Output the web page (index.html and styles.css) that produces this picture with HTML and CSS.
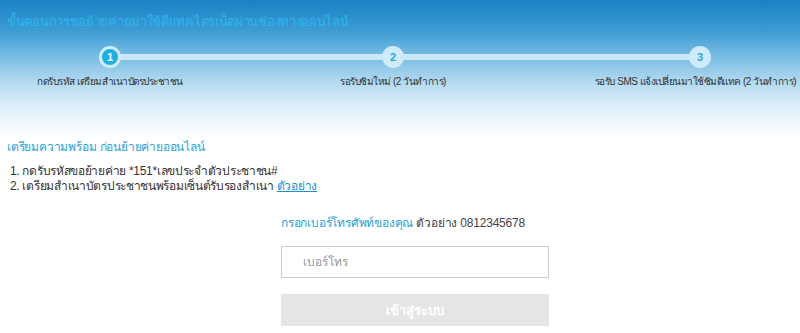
FILE: index.html
```html
<!DOCTYPE html>
<html lang="th">
<head>
<meta charset="utf-8">
<link rel="stylesheet" href="styles.css">
</head>
<body>
<div class="header">
  <h1 class="title">ขั้นตอนการขอย้ายค่ายมาใช้ดีแทคไตรเน็ตผ่านช่องทางออนไลน์</h1>
  <div class="steps">
    <div class="step step-1">
      <span class="dot active">1</span>
      <span class="label">กดรับรหัส เตรียมสำเนาบัตรประชาชน</span>
    </div>
    <div class="step step-2">
      <span class="dot">2</span>
      <span class="label">รอรับซิมใหม่ (2 วันทำการ)</span>
    </div>
    <div class="step step-3">
      <span class="dot">3</span>
      <span class="label">รอรับ SMS แจ้งเปลี่ยนมาใช้ซิมดีแทค (2 วันทำการ)</span>
    </div>
  </div>
</div>
<div class="prep">
  <h2 class="prep-title">เตรียมความพร้อม ก่อนย้ายค่ายออนไลน์</h2>
  <ol class="prep-list">
    <li>กดรับรหัสขอย้ายค่าย *151*เลขประจำตัวประชาชน#</li>
    <li>เตรียมสำเนาบัตรประชาชนพร้อมเซ็นต์รับรองสำเนา <a href="#" class="link">ตัวอย่าง</a></li>
  </ol>
</div>
<div class="login">
  <p class="login-label"><span class="blue">กรอกเบอร์โทรศัพท์ของคุณ</span> ตัวอย่าง 0812345678</p>
  <input class="phone" type="text" placeholder="เบอร์โทร">
  <button class="submit">เข้าสู่ระบบ</button>
</div>
</body>
</html>
```
FILE: styles.css
```css
* { box-sizing: border-box; }
html, body { margin: 0; padding: 0; background: #fff; }
body {
  font-family: "Liberation Sans", sans-serif;
  color: #333;
  width: 800px;
  height: 333px;
  overflow: hidden;
}
.header {
  height: 138px;
  background: linear-gradient(to bottom, #1a82c4 0%, #3c9bd3 22%, #76bbe3 40%, #b4daf0 60%, #e0f0fa 78%, #ffffff 100%);
  padding-top: 12px;
}
.title {
  margin: 0 0 0 7px;
  font-size: 13px;
  letter-spacing: -0.3px;
  font-weight: normal;
  color: #2cb6ef;
  line-height: 20px;
  height: 20px;
}
.steps {
  position: relative;
  display: grid;
  grid-template-columns: 220px 346px 34px 200px;
  margin-top: 14px;
}
.steps::before {
  content: "";
  position: absolute;
  left: 110px;
  right: 100px;
  top: 8px;
  height: 6px;
  background: #cbe8f6;
}
.step {
  position: relative;
  display: flex;
  flex-direction: column;
  align-items: center;
}
.step-3 { grid-column: 4; }
.dot {
  width: 22px;
  height: 22px;
  border-radius: 50%;
  background: #cfeaf8;
  color: #1fa9e6;
  font-size: 11px;
  font-weight: bold;
  display: flex;
  align-items: center;
  justify-content: center;
}
.dot.active {
  background: #1ab0e8;
  color: #fff;
  border: 3px solid #d2ecf8;
}
.label {
  margin-top: 7px;
  font-size: 10px;
  letter-spacing: -0.5px;
  line-height: 14px;
  color: #333;
  white-space: nowrap;
}
.step-3 .label {
  align-self: flex-end;
  margin-right: 4px;
}
.prep {
  padding: 0 7px;
}
.prep-title {
  margin: 0;
  font-size: 12px;
  letter-spacing: -0.2px;
  font-weight: normal;
  color: #2ba3d9;
  line-height: 18px;
}
.prep-list {
  margin: 8px 0 0;
  padding-left: 3px;
  list-style-position: inside;
  font-size: 12px;
  letter-spacing: -0.3px;
  line-height: 15px;
  color: #333;
}
.link { color: #1a8fd6; text-decoration: underline; }
.login {
  width: 268px;
  margin: 21px 0 0 281px;
}
.login-label {
  margin: 0;
  font-size: 12px;
  letter-spacing: -0.2px;
  line-height: 16px;
  color: #444;
}
.blue { color: #2ba3d9; }
.phone {
  display: block;
  width: 268px;
  height: 32px;
  margin-top: 15px;
  border: 1px solid #ccc;
  padding: 0 0 0 21px;
  font-family: inherit;
  font-size: 12px;
  outline: none;
}
.phone::placeholder { color: #999; }
.submit {
  display: block;
  width: 268px;
  height: 32px;
  margin-top: 16px;
  border: 0;
  background: #e5e5e5;
  color: #fff;
  font-family: inherit;
  font-size: 13px;
  font-weight: bold;
}
```
